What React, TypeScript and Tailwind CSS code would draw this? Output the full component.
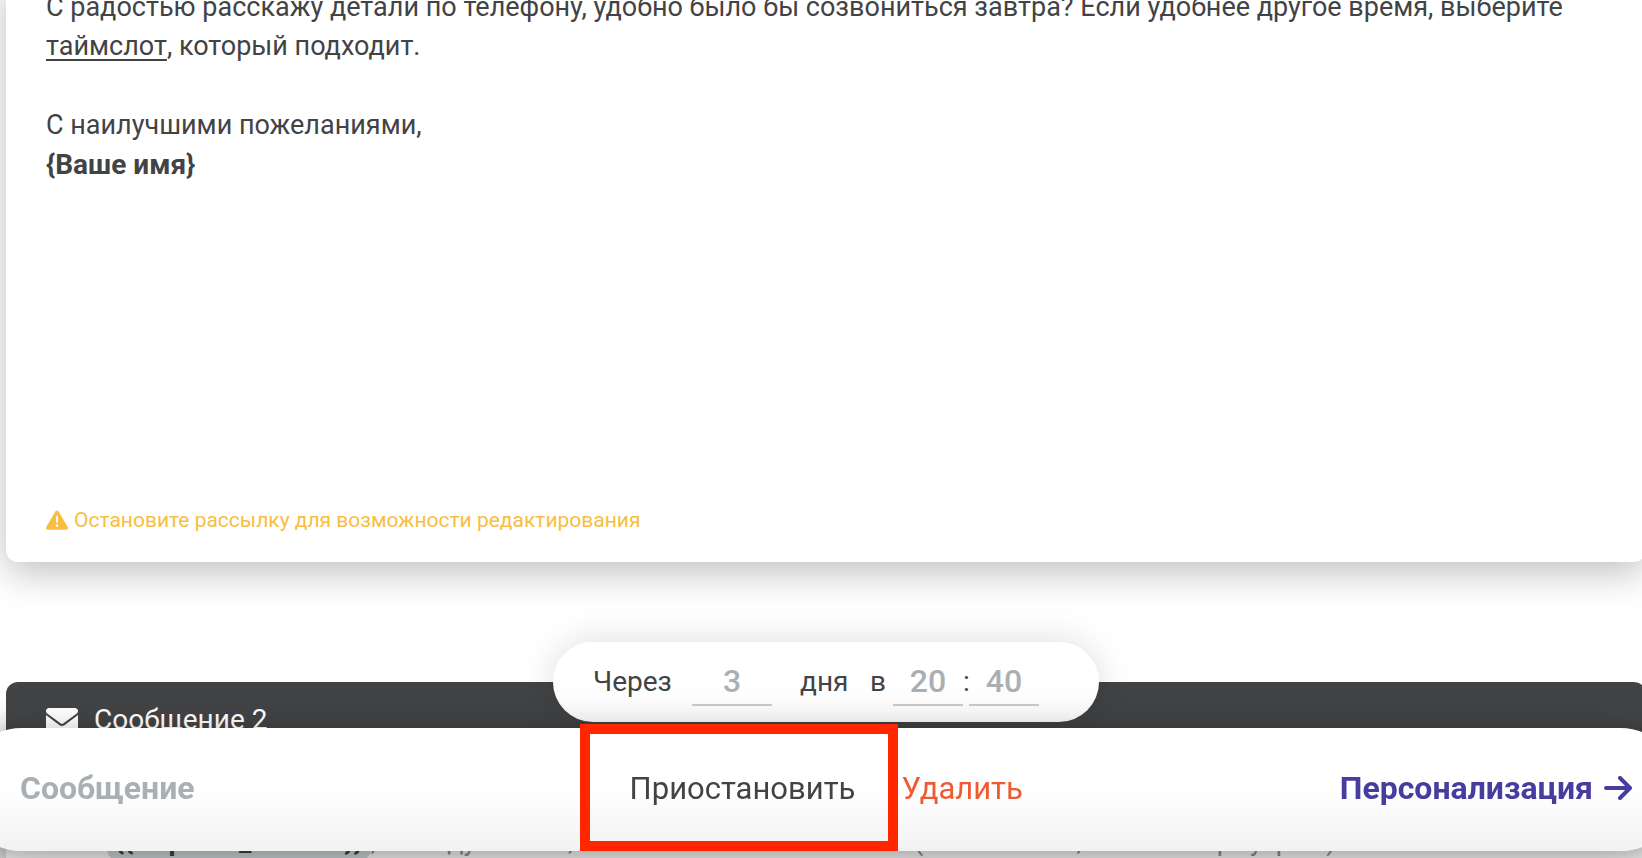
import { FaEnvelope, FaTriangleExclamation } from "react-icons/fa6";

function MessageCard() {
  return (
    <section className="-mt-6 rounded-xl bg-white px-10 pb-[26px] pt-3 shadow-[0_10px_38px_rgba(0,0,0,0.26)]">
      <div className="min-h-[516px] text-[27px] leading-[39px]">
        <p>
          С радостью расскажу детали по телефону, удобно было бы созвониться завтра? Если удобнее другое время, выберите{" "}
          <a href="#timeslot" className="underline decoration-2 underline-offset-4">таймслот</a>, который подходит.
        </p>
        <p className="mt-10">С наилучшими пожеланиями,</p>
        <p className="text-[28px] font-bold">{"{Ваше имя}"}</p>
      </div>
      <p className="flex items-center gap-[6px] text-[21px] leading-8 text-[#f9bd3f]">
        <FaTriangleExclamation className="size-[22px]" />
        Остановите рассылку для возможности редактирования
      </p>
    </section>
  );
}

function DelayPill() {
  return (
    <form className="relative z-10 mx-auto mt-20 flex h-20 w-[546px] items-center rounded-full bg-linear-to-b from-white from-50% to-[#f8f8f8] pl-10 text-[28px] shadow-[0_0_36px_rgba(0,0,0,0.14)]">
      <label htmlFor="days" className="w-[99px]">Через</label>
      <input id="days" defaultValue="3" className="h-12 w-20 border-b-2 border-[#c8c8c8] text-center text-[32px] font-medium text-[#a8b0b4]" />
      <span className="ml-7 w-[70px]">дня</span>
      <label htmlFor="hours" className="w-[23px]">в</label>
      <input id="hours" defaultValue="20" className="h-12 w-[70px] border-b-2 border-[#c8c8c8] text-center text-[32px] font-medium text-[#a8b0b4]" />
      <label htmlFor="minutes" className="w-[6px]">:</label>
      <input id="minutes" defaultValue="40" className="h-12 w-[70px] border-b-2 border-[#c8c8c8] text-center text-[32px] font-medium text-[#a8b0b4]" />
    </form>
  );
}

function NextMessage() {
  return (
    <section className="-mt-10 rounded-xl shadow-[0_40px_36px_rgba(0,0,0,0.26)]">
      <header className="flex h-19 items-center gap-4 rounded-t-xl bg-[#424345] px-10 text-[28px] text-white">
        <FaEnvelope className="size-8" />
        <h2>Сообщение 2</h2>
      </header>
      <div className="bg-white px-[101px] pb-10 pt-[63px] text-[27px] leading-[39px] text-[#8d9499]">
        <p>
          <span className="rounded-xl bg-[#d2dce1] px-2 py-1 text-[28px] font-bold text-[#424345]">{"{{Первый_клиент}}"}</span>
          , и я жду ответа, чтобы вам помочь с этим (если можно, то в четверг утром)
        </p>
      </div>
    </section>
  );
}

function ActionBar() {
  return (
    <nav className="fixed inset-x-[-40px] bottom-[7px] z-20 flex h-[123px] items-center justify-between rounded-full bg-linear-to-b from-white from-50% to-[#f2f2f2] pb-1 pl-[60px] pr-[50px] text-[31px] shadow-[0_10px_36px_rgba(0,0,0,0.4)]">
      <button type="button" className="flex-1 text-left text-[32px] font-bold text-[#a8b0b4]">Сообщение</button>
      <div className="flex items-center">
        <button type="button" className="h-[127px] w-[318px] border-10 border-[#ff2600] pl-2 pt-1">Приостановить</button>
        <button type="button" className="w-[175px] pl-1 pt-1 text-left text-[#ee5a32]">Удалить</button>
      </div>
      <button type="button" className="flex flex-1 items-center justify-end gap-[11px] text-[32px] font-bold text-[#483d9e]">
        Персонализация
        <svg viewBox="0 0 28 24" className="h-6 w-7 shrink-0" fill="none" stroke="currentColor" strokeWidth="4" strokeLinecap="round" strokeLinejoin="round">
          <path d="M2 12H25M16 2L26 12L16 22" />
        </svg>
      </button>
    </nav>
  );
}

export default function App() {
  return (
    <main className="h-screen overflow-hidden bg-white pl-[6px] font-['Roboto',sans-serif] text-[#424345]">
      <div className="-mr-1">
        <MessageCard />
        <DelayPill />
        <NextMessage />
      </div>
      <ActionBar />
    </main>
  );
}
